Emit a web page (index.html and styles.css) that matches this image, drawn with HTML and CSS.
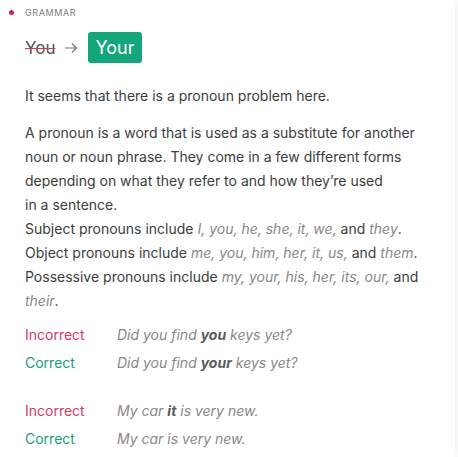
FILE: index.html
```html
<!DOCTYPE html>
<html>
<head>
<meta charset="utf-8">
<link rel="stylesheet" href="styles.css">
</head>
<body>
<div class="card">
  <div class="head">
    <span class="dot"></span>
    <span class="label">GRAMMAR</span>
  </div>
  <div class="fix">
    <span class="old">You</span>
    <span class="arrow">
      <svg width="14" height="12" viewBox="0 0 14 12"><path d="M1 6h12M8 1.5L12.5 6 8 10.5" fill="none" stroke="#777" stroke-width="1.2"/></svg>
    </span>
    <span class="new">Your</span>
  </div>
  <p class="intro">It seems that there is a pronoun problem here.</p>
  <p class="body">A pronoun is a word that is used as a substitute for another noun or noun phrase. They come in a few different forms depending on what they refer to and how they’re used<br>in a sentence.<br>Subject pronouns include <i>I, you, he, she, it, we,</i> and <i>they</i>.<br>Object pronouns include <i>me, you, him, her, it, us,</i> and <i>them</i>.<br>Possessive pronouns include <i>my, your, his, her, its, our,</i> and <i>their</i>.</p>
  <div class="examples">
    <div class="ex"><span class="bad">Incorrect</span><i>Did you find <b>you</b> keys yet?</i></div>
    <div class="ex"><span class="good">Correct</span><i>Did you find <b>your</b> keys yet?</i></div>
  </div>
  <div class="examples">
    <div class="ex"><span class="bad">Incorrect</span><i>My car <b>it</b> is very new.</i></div>
    <div class="ex"><span class="good">Correct</span><i>My car is very new.</i></div>
  </div>
</div>
</body>
</html>
```
FILE: styles.css
```css
* { box-sizing: border-box; }
html, body { margin: 0; padding: 0; background: #fff; }
body { font-family: Inter, "Noto Sans", sans-serif; color: #3d3d3d; width: 458px; height: 457px; overflow: hidden; }
.card {
  width: 455px;
  height: 457px;
  padding: 0 0 0 25px;
  background: #fff;
  box-shadow: 3px 0 10px rgba(0,0,0,0.06);
}
.head { display: flex; align-items: center; height: 24px; position: relative; }
.dot { position: absolute; left: -16px; top: 10px; width: 5px; height: 5px; border-radius: 50%; background: #d31f56; }
.label { font-size: 9px; letter-spacing: 0.6px; color: #808080; }
.fix { display: flex; align-items: center; margin-top: 8px; height: 31px; }
.old { font-size: 17px; color: #555; text-decoration: line-through; text-decoration-color: #d3385e; text-decoration-thickness: 1px; }
.arrow { margin: 0 10px 0 9px; display: flex; }
.new { background: #15a57a; color: #fff; font-size: 18px; padding: 0 7px; height: 31px; line-height: 31px; border-radius: 3px; }
p { margin: 0; font-size: 14px; line-height: 24px; }
.intro { margin-top: 21px; }
.body { margin-top: 13px; width: 400px; }
i { color: #888; }
.examples { margin-top: 8px; }
.examples + .examples { margin-top: 20px; }
.ex { display: flex; font-size: 14px; line-height: 28px; }
.ex span { width: 92px; }
.ex b { color: #5a5a5a; }
.bad { color: #d63a63; }
.good { color: #16a077; }
```
